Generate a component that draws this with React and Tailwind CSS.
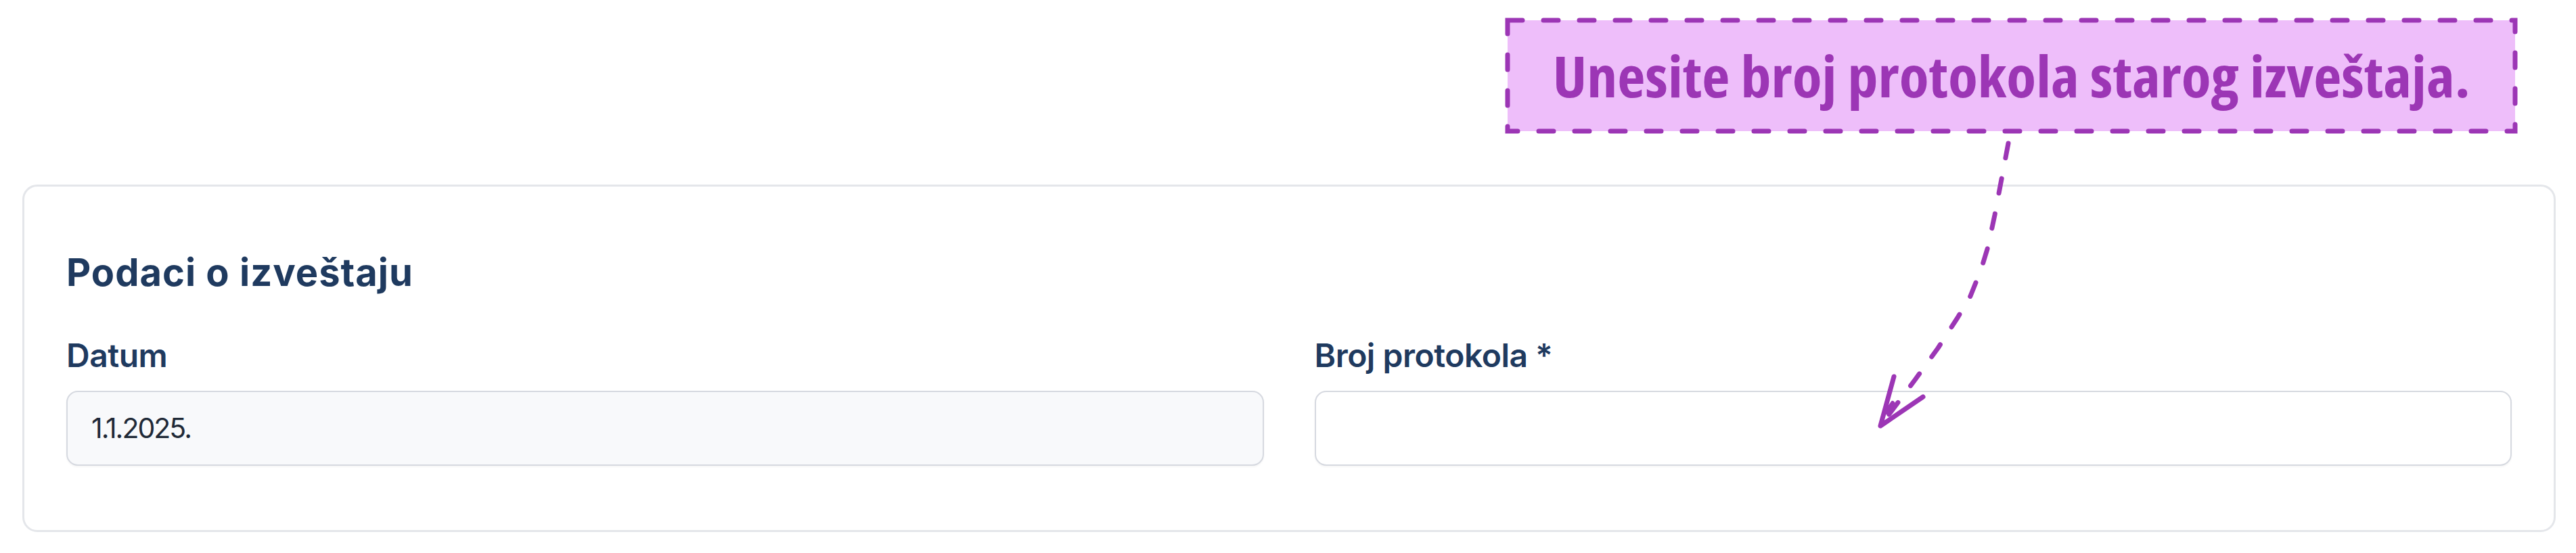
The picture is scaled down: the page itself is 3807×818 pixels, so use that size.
import React from 'react';

const violet = '#9c36b5';

const Field = ({ label, value, muted }) => (
    <div className="flex flex-col">
        <label className="text-[48px] leading-[64px] font-semibold text-[#1f3a5f] tracking-[-0.5px]">{label}</label>
        <div
            className={`mt-[20px] h-[111px] rounded-[17px] border-2 border-[#d6d9e0] flex items-center pl-[35px] text-[41px] text-[#1f2937] tracking-[-2px] shadow-[0_2px_3px_rgba(0,0,0,0.04)] ${muted ? 'bg-[#f8f9fb]' : 'bg-white'}`}
        >
            {value}
        </div>
    </div>
);

const Annotation = () => {
    // arrow follows the dashes of the hand-drawn hint
    const pts = [
        [2968, 212], [2958, 265], [2948, 318], [2938, 365], [2928, 398],
        [2912, 438], [2893, 470], [2864, 515], [2830, 562], [2779, 630],
    ];
    const d = pts.map((p, i) => `${i ? 'L' : 'M'} ${p[0]} ${p[1]}`).join(' ');

    return (
        <>
            <svg className="absolute left-0 top-0 pointer-events-none" width="3807" height="818" viewBox="0 0 3807 818">
                <rect x="2228" y="30" width="1489" height="164" fill="#eebefa" stroke={violet} strokeWidth="7" strokeDasharray="22 31" strokeLinecap="round" />
                <path d={d} fill="none" stroke={violet} strokeWidth="7" strokeDasharray="22 31" strokeLinecap="round" strokeLinejoin="round" />
                <path d="M 2799 557 L 2779 630 L 2842 587" fill="none" stroke={violet} strokeWidth="7" strokeLinecap="round" strokeLinejoin="round" />
                <path d="M 2797 596 L 2787 610" fill="none" stroke={violet} strokeWidth="6" strokeLinecap="round" />
            </svg>
            <div className="absolute left-[2228px] top-[30px] w-[1489px] h-[164px] flex items-center justify-center">
                <span
                    className="whitespace-nowrap text-[84px] leading-none font-bold text-[#9c36b5] scale-x-[1.07] [font-stretch:condensed]"
                    style={{ fontFamily: '"Open Sans", "Noto Sans", sans-serif' }}
                >
                    Unesite broj protokola starog izveštaja.
                </span>
            </div>
        </>
    );
};

const App = () => {
    return (
        <div className="relative w-[3807px] h-[818px] bg-white overflow-hidden" style={{ fontFamily: 'Inter, "Liberation Sans", sans-serif' }}>
            <div className="pt-[273px] pl-[33px]">
                <div className="w-[3744px] h-[514px] rounded-[22px] border-[3px] border-[#e4e6ea] bg-white pt-[89px] px-[62px]">
                    <h2 className="text-[56px] leading-[76px] font-bold text-[#1f3a5f] tracking-[1px]">Podaci o izveštaju</h2>
                    <div className="mt-[53px] grid grid-cols-2 gap-x-[75px]">
                        <Field label="Datum" value="1.1.2025." muted />
                        <Field label="Broj protokola *" value="" />
                    </div>
                </div>
            </div>
            <Annotation />
        </div>
    );
};

export default App;
